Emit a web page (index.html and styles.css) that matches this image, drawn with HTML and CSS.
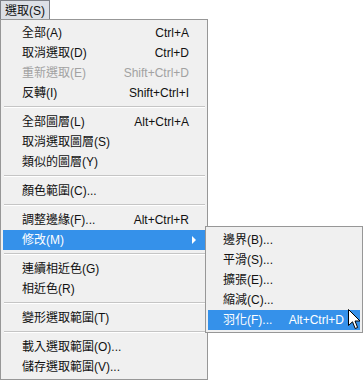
FILE: index.html
```html
<!DOCTYPE html>
<html lang="zh-Hant">
<head>
    <meta charset="UTF-8">
    <title>選取選單</title>
    <link rel="stylesheet" href="styles.css">
</head>
<body>
    <div class="menubar">
        <div class="menu-title">選取(S)</div>
    </div>
    <div class="menus">
        <div class="menu">
            <div class="item"><span>全部(A)</span><span class="key">Ctrl+A</span></div>
            <div class="item"><span>取消選取(D)</span><span class="key">Ctrl+D</span></div>
            <div class="item disabled"><span>重新選取(E)</span><span class="key">Shift+Ctrl+D</span></div>
            <div class="item"><span>反轉(I)</span><span class="key">Shift+Ctrl+I</span></div>
            <div class="sep"></div>
            <div class="item"><span>全部圖層(L)</span><span class="key">Alt+Ctrl+A</span></div>
            <div class="item"><span>取消選取圖層(S)</span></div>
            <div class="item"><span>類似的圖層(Y)</span></div>
            <div class="sep"></div>
            <div class="item"><span>顏色範圍(C)...</span></div>
            <div class="sep"></div>
            <div class="item"><span>調整邊緣(F)...</span><span class="key">Alt+Ctrl+R</span></div>
            <div class="item active"><span>修改(M)</span><span class="arrow"></span></div>
            <div class="sep"></div>
            <div class="item"><span>連續相近色(G)</span></div>
            <div class="item"><span>相近色(R)</span></div>
            <div class="sep"></div>
            <div class="item"><span>變形選取範圍(T)</span></div>
            <div class="sep"></div>
            <div class="item"><span>載入選取範圍(O)...</span></div>
            <div class="item"><span>儲存選取範圍(V)...</span></div>
        </div>

        <div class="submenu">
            <div class="item"><span>邊界(B)...</span></div>
            <div class="item"><span>平滑(S)...</span></div>
            <div class="item"><span>擴張(E)...</span></div>
            <div class="item"><span>縮減(C)...</span></div>
            <div class="item active"><span>羽化(F)...</span><span class="key">Alt+Ctrl+D</span></div>
        </div>

        <svg class="cursor" width="13" height="21" viewBox="0 0 13 21">
            <path d="M0.5 0.5 L0.5 16.5 L4.5 12.8 L7.2 19.5 L9.6 18.5 L7 12 L12 12 Z" fill="#fff" stroke="#000" stroke-width="1"/>
        </svg>
    </div>
</body>
</html>
```

FILE: styles.css
```css
body {
    margin: 0;
    background: #fff;
    font-family: 'Liberation Sans', 'Noto Sans CJK TC', sans-serif;
    font-size: 12px;
    color: #111;
}
.menubar {
    height: 19px;
    display: flex;
}
.menu-title {
    box-sizing: border-box;
    width: 50px;
    height: 19px;
    padding: 2px 0 0 4px;
    line-height: 16px;
    background: #dde0e6;
    border: 1px solid #7d8087;
    border-bottom: none;
}
.menus {
    position: relative;
}
.menu {
    box-sizing: border-box;
    width: 208px;
    padding: 3px 2px 2px 2px;
    background: #f0f0f0;
    border: 1px solid #979797;
}
.item {
    display: flex;
    justify-content: space-between;
    align-items: center;
    height: 20px;
    line-height: 20px;
    padding: 0 16px 0 19px;
    white-space: nowrap;
}
.item.disabled {
    color: #a2a2a2;
}
.item.active {
    background: #3591ea;
    color: #fff;
}
.arrow {
    width: 0;
    height: 0;
    margin-right: -7px;
    border-top: 4px solid transparent;
    border-bottom: 4px solid transparent;
    border-left: 4px solid #fff;
}
.sep {
    height: 1px;
    margin: 3px 0 4px 1px;
    background: #c5c5c5;
    border-bottom: 1px solid #fff;
}
/* popup submenu sits over the page */
.submenu {
    position: absolute;
    left: 205px;
    top: 207px;
    box-sizing: border-box;
    width: 158px;
    padding: 3px 2px 2px 2px;
    background: #f0f0f0;
    border: 1px solid #979797;
}
.submenu .item {
    padding: 0 16px 0 15px;
}
.cursor {
    position: absolute;
    left: 348px;
    top: 290px;
}
```
